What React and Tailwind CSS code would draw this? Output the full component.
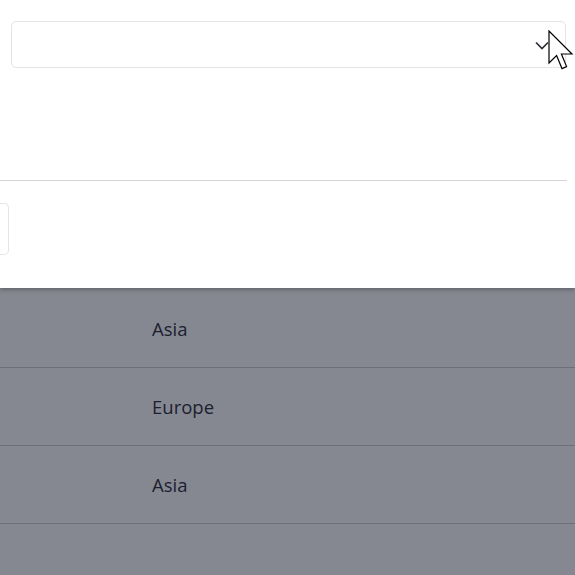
export default function App() {
  const rows = ["Asia", "Europe", "Asia", ""];
  return (
    <div className="relative w-[575px] h-[575px] overflow-hidden bg-[#858891]" style={{ fontFamily: '"Open Sans", "Noto Sans", sans-serif' }}>
      <div className="relative z-10 h-[288px] bg-white shadow-[0_2px_4px_rgba(0,0,0,0.25)] flex flex-col">
        <div className="ml-[11px] mt-[21px] w-[555px] h-[47px] rounded-[5px] border border-[#e4e4e7] flex items-center justify-end pr-[16px]">
          <svg width="14" height="9" viewBox="0 0 14 9" className="mt-[1px]">
            <path d="M1 1.5 L7 7.5 L13 1.5" fill="none" stroke="#2d2f36" strokeWidth="1.7" />
          </svg>
        </div>
        <div className="mt-[112px] w-[567px] border-t border-[#d4d4d8]" />
        <div className="mt-[22px] w-[9px] h-[52px] rounded-r-[5px] border border-l-0 border-[#e4e4e7]" />
      </div>
      <div className="flex flex-col pt-[2px]">
        {rows.map((r, i) => (
          <div key={i} className="h-[78px] border-b border-[#6c6f79] flex items-center pl-[152px] text-[18.5px] text-[#1c2030]">
            {r}
          </div>
        ))}
      </div>
      <svg className="absolute left-[548px] top-[30px] z-20" width="26" height="42" viewBox="0 0 13 21">
        <path d="M0.5 0.5 L0.5 16.5 L4.3 12.8 L7 19.3 L9.3 18.3 L6.7 12 L12 12 Z" fill="#fff" stroke="#000" strokeWidth="0.6" strokeLinejoin="miter" />
      </svg>
    </div>
  );
}
